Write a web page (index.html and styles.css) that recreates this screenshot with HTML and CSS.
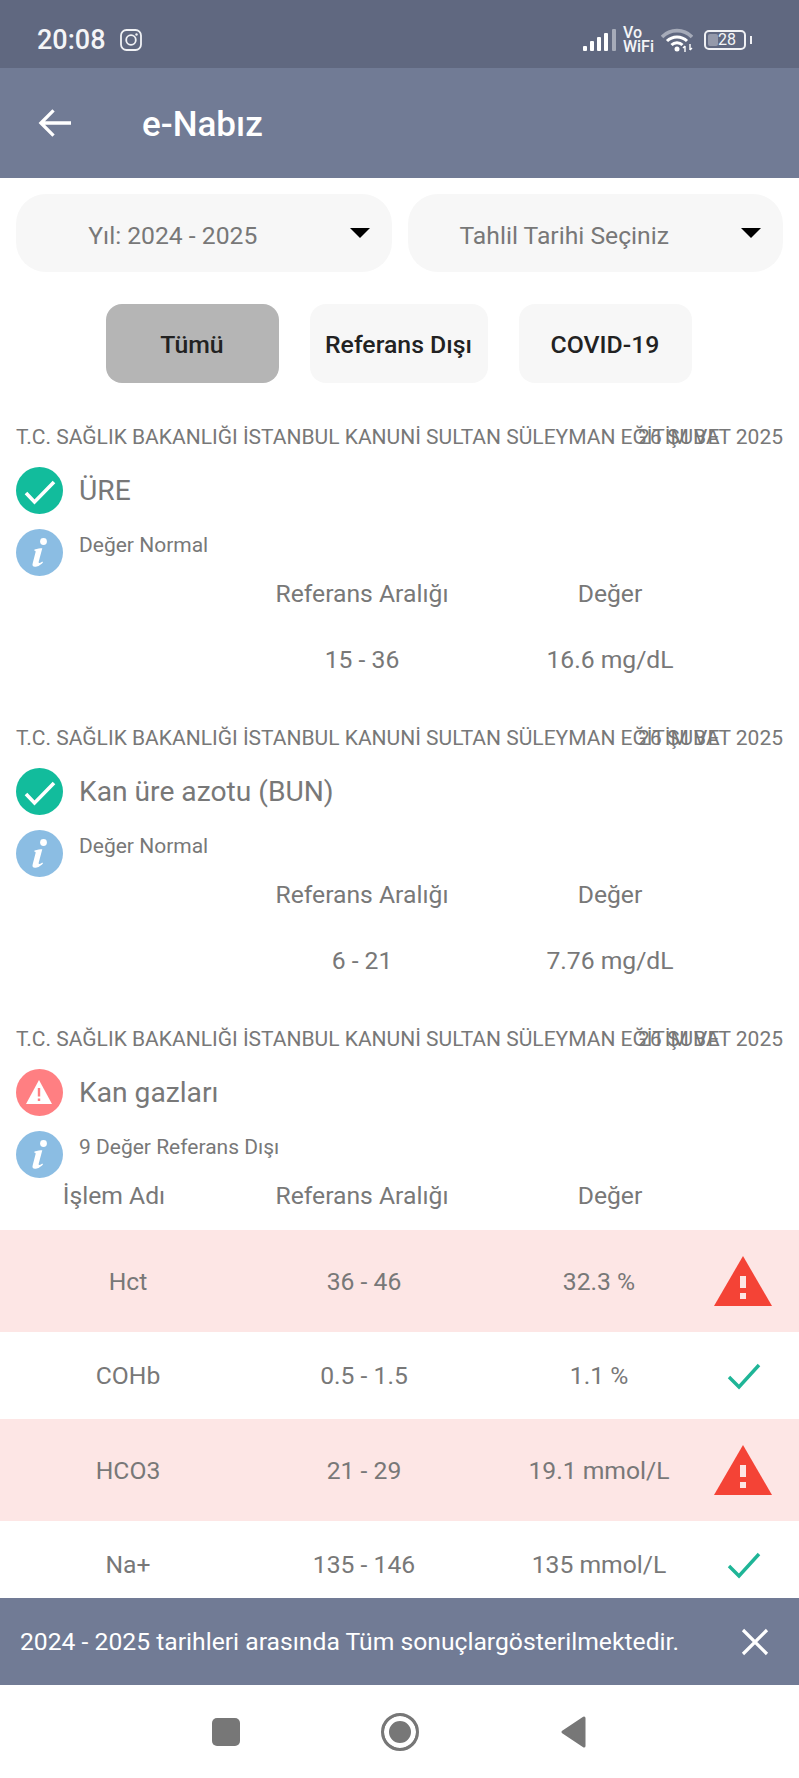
FILE: index.html
```html
<!DOCTYPE html>
<html lang="tr">
<head>
    <meta charset="UTF-8">
    <meta name="viewport" content="width=device-width, initial-scale=1.0">
    <title>e-Nabız</title>
    <link rel="stylesheet" href="styles.css">
</head>
<body>
    <svg class="defs" width="0" height="0">
        <symbol id="ok-circle" viewBox="0 0 47 47">
            <circle cx="23.5" cy="23.5" r="23.5" fill="#12bc9c"/>
            <path d="M10 26l8.500 9L38 15" fill="none" stroke="#fff" stroke-width="3.600"/>
        </symbol>
        <symbol id="info-circle" viewBox="0 0 47 47">
            <circle cx="23.5" cy="23.5" r="23.5" fill="#8bbde3"/>
            <circle cx="27.5" cy="12.5" r="3.4" fill="#fff"/>
            <path d="M18.5 20.5c3-1 5.6-1.3 7.8-1.3l-3.6 13.6c-.4 1.5.6 1.8 3.6-.4l.7 1c-3.4 3.4-5.5 4.3-8 4.3-2.4 0-2.9-1.4-2.3-3.5l2.9-11.2c.2-1-.4-1.3-1.3-1.2z" fill="#fff"/>
        </symbol>
        <symbol id="alert-circle" viewBox="0 0 47 47">
            <circle cx="23.5" cy="23.5" r="23.5" fill="#ff7f82"/>
            <path d="M23 11L36 35H10z" fill="#fff"/>
            <path d="M21.800 19h2.400v8.500h-2.400zM21.800 29.500h2.400v2.600h-2.400z" fill="#ff7f82"/>
        </symbol>
        <symbol id="alert-mark" viewBox="0 0 58 50">
            <path d="M29 0l29 50H0z" fill="#f44336"/>
            <path d="M26 20h6v12h-6zM26 37h6v6h-6z" fill="#fde6e5"/>
        </symbol>
        <symbol id="ok-mark" viewBox="0 0 34 28">
            <path d="M2 15l10 10L32 3" fill="none" stroke="#1fb597" stroke-width="3.4"/>
        </symbol>
    </svg>

    <div class="phone">
        <!-- Barra de estado -->
        <div class="status-bar">
            <span class="clock">20:08</span>
            <svg class="insta" viewBox="0 0 22 22">
                <rect x="1" y="1" width="20" height="20" rx="5.500" fill="none" stroke="#f1f2f5" stroke-width="1.800"/>
                <circle cx="11" cy="11" r="4.800" fill="none" stroke="#f1f2f5" stroke-width="1.800"/>
                <circle cx="16.500" cy="5.500" r="1.200" fill="#f1f2f5"/>
            </svg>
            <div class="status-icons">
                <svg class="signal" viewBox="0 0 34 22">
                    <rect x="0" y="17" width="4" height="5" rx="1" fill="#fff"/>
                    <rect x="7" y="12" width="4" height="10" rx="1" fill="#fff"/>
                    <rect x="14" y="8" width="4" height="14" rx="1" fill="#fff"/>
                    <rect x="21" y="4" width="4" height="18" rx="1" fill="#fff"/>
                    <rect x="29" y="0" width="4" height="22" rx="1" fill="#a6abb9"/>
                </svg>
                <div class="vowifi"><span>Vo</span><span>WiFi</span></div>
                <svg class="wifi" viewBox="0 0 32 24">
                    <path d="M1 9c8-8.500 22-8.500 30 0" fill="none" stroke="#a6abb9" stroke-width="3.600"/>
                    <path d="M6 13c5.500-5.500 14.500-5.500 20 0" fill="none" stroke="#fff" stroke-width="3"/>
                    <path d="M10.500 17c3-3 8-3 11 0" fill="none" stroke="#fff" stroke-width="3"/>
                    <circle cx="16" cy="21" r="2.500" fill="#fff"/>
                    <path d="M24 24v-6M24 18l-2 2M29 16v6M29 22l2-2" fill="none" stroke="#fff" stroke-width="1.400"/>
                </svg>
                <div class="battery">
                    <div class="battery-body"><span class="battery-fill"></span><span class="battery-num">28</span></div>
                    <span class="battery-nub"></span>
                </div>
            </div>
        </div>

        <header class="app-bar">
            <svg class="back" viewBox="0 0 34 30">
                <path d="M16 2L3 15l13 13M3 15h31" fill="none" stroke="#fff" stroke-width="3.400"/>
            </svg>
            <h1>e-Nabız</h1>
        </header>

        <main class="content">
            <div class="selects">
                <div class="select">
                    <span>Yıl: 2024 - 2025</span>
                    <i class="caret"></i>
                </div>
                <div class="select">
                    <span>Tahlil Tarihi Seçiniz</span>
                    <i class="caret"></i>
                </div>
            </div>

            <div class="filters">
                <button class="filter active">Tümü</button>
                <button class="filter wide">Referans Dışı</button>
                <button class="filter">COVID-19</button>
            </div>

            <section class="card">
                <div class="source">
                    <span class="hospital">T.C. SAĞLIK BAKANLIĞI İSTANBUL KANUNİ SULTAN SÜLEYMAN EĞİTİM VE</span>
                    <span class="date">26 ŞUBAT 2025</span>
                </div>
                <div class="title-row">
                    <svg class="badge"><use href="#ok-circle"/></svg>
                    <h3>ÜRE</h3>
                </div>
                <div class="note-row">
                    <svg class="badge"><use href="#info-circle"/></svg>
                    <p>Değer Normal</p>
                </div>
                <div class="row head">
                    <span></span><span>Referans Aralığı</span><span>Değer</span><span></span>
                </div>
                <div class="row">
                    <span></span><span>15 - 36</span><span>16.6 mg/dL</span><span></span>
                </div>
            </section>

            <section class="card">
                <div class="source">
                    <span class="hospital">T.C. SAĞLIK BAKANLIĞI İSTANBUL KANUNİ SULTAN SÜLEYMAN EĞİTİM VE</span>
                    <span class="date">26 ŞUBAT 2025</span>
                </div>
                <div class="title-row">
                    <svg class="badge"><use href="#ok-circle"/></svg>
                    <h3>Kan üre azotu (BUN)</h3>
                </div>
                <div class="note-row">
                    <svg class="badge"><use href="#info-circle"/></svg>
                    <p>Değer Normal</p>
                </div>
                <div class="row head">
                    <span></span><span>Referans Aralığı</span><span>Değer</span><span></span>
                </div>
                <div class="row">
                    <span></span><span>6 - 21</span><span>7.76 mg/dL</span><span></span>
                </div>
            </section>

            <section class="card">
                <div class="source">
                    <span class="hospital">T.C. SAĞLIK BAKANLIĞI İSTANBUL KANUNİ SULTAN SÜLEYMAN EĞİTİM VE</span>
                    <span class="date">26 ŞUBAT 2025</span>
                </div>
                <div class="title-row">
                    <svg class="badge"><use href="#alert-circle"/></svg>
                    <h3>Kan gazları</h3>
                </div>
                <div class="note-row">
                    <svg class="badge"><use href="#info-circle"/></svg>
                    <p>9 Değer Referans Dışı</p>
                </div>
                <div class="row head head-full">
                    <span>İşlem Adı</span><span>Referans Aralığı</span><span>Değer</span><span></span>
                </div>
                <div class="row item out">
                    <span>Hct</span><span>36 - 46</span><span>32.3 %</span>
                    <svg class="mark-alert"><use href="#alert-mark"/></svg>
                </div>
                <div class="row item">
                    <span>COHb</span><span>0.5 - 1.5</span><span>1.1 %</span>
                    <svg class="mark-ok"><use href="#ok-mark"/></svg>
                </div>
                <div class="row item out">
                    <span>HCO3</span><span>21 - 29</span><span>19.1 mmol/L</span>
                    <svg class="mark-alert"><use href="#alert-mark"/></svg>
                </div>
                <div class="row item">
                    <span>Na+</span><span>135 - 146</span><span>135 mmol/L</span>
                    <svg class="mark-ok"><use href="#ok-mark"/></svg>
                </div>
            </section>
        </main>

        <div class="banner">
            <span>2024 - 2025 tarihleri arasında Tüm sonuçlargösterilmektedir.</span>
            <svg class="close" viewBox="0 0 28 28">
                <path d="M2 2l24 24M26 2L2 26" fill="none" stroke="#fff" stroke-width="3.200"/>
            </svg>
        </div>

        <!-- Barra de navegación -->
        <nav class="nav-bar">
            <span class="nav-square"></span>
            <span class="nav-circle"></span>
            <svg class="nav-back" viewBox="0 0 26 32">
                <path d="M24 2v28L3 16z" fill="#777" stroke="#777" stroke-width="3" stroke-linejoin="round"/>
            </svg>
        </nav>
    </div>
</body>
</html>
```

FILE: styles.css
```css
/* Estilos Generales */
body {
    font-family: Roboto, "Liberation Sans", sans-serif;
    background-color: #fff;
    margin: 0;
    padding: 0;
    color: #787878;
}

.defs {
    position: absolute;
}

.phone {
    width: 799px;
    height: 1778px;
    display: flex;
    flex-direction: column;
    overflow: hidden;
}

/* Barra de estado */
.status-bar {
    height: 68px;
    flex: none;
    background-color: #606880;
    display: flex;
    align-items: center;
    padding: 11px 47px 0 37px;
    color: #f4f5f7;
    box-sizing: border-box;
}

.clock {
    font-size: 27px;
    font-weight: 500;
}

.insta {
    width: 22px;
    height: 22px;
    margin-left: 14px;
}

.status-icons {
    margin-left: auto;
    display: flex;
    align-items: center;
}

.signal {
    width: 34px;
    height: 22px;
}

.vowifi {
    display: flex;
    flex-direction: column;
    margin-left: 6px;
    font-size: 16px;
    line-height: 14px;
    font-weight: 500;
}

.wifi {
    width: 32px;
    height: 24px;
    margin-left: 7px;
}

.battery {
    display: flex;
    align-items: center;
    margin-left: 11px;
}

.battery-body {
    width: 42px;
    height: 20px;
    border: 2px solid #f0f1f4;
    border-radius: 5px;
    box-sizing: border-box;
    position: relative;
    display: flex;
    align-items: center;
    justify-content: center;
}

.battery-fill {
    position: absolute;
    left: 2px;
    top: 2px;
    bottom: 2px;
    width: 10px;
    background-color: #9499aa;
    border-radius: 2px;
}

.battery-num {
    position: relative;
    font-size: 16px;
    margin-left: 4px;
}

.battery-nub {
    width: 2px;
    height: 8px;
    margin-left: 4px;
    background-color: #f0f1f4;
}

/* Barra superior */
.app-bar {
    height: 110px;
    flex: none;
    background-color: #717b95;
    display: flex;
    align-items: center;
    padding-left: 38px;
    color: #fff;
}

.back {
    width: 33px;
    height: 30px;
}

.app-bar h1 {
    margin: 2px 0 0 71px;
    font-size: 35px;
    font-weight: 500;
}

/* Contenido */
.content {
    flex: 1;
    min-height: 0;
    overflow: hidden;
    padding-top: 16px;
}

.selects {
    display: flex;
    gap: 16px;
    padding: 0 16px;
}

.select {
    flex: 1;
    height: 78px;
    background-color: #f7f7f7;
    border-radius: 30px;
    display: flex;
    align-items: center;
    justify-content: space-between;
    padding: 0 22px 0 0;
    font-size: 24.700px;
}

.select span {
    flex: 1;
    text-align: center;
    padding: 4px 20px 0 0;
}

.caret {
    width: 0;
    height: 0;
    border-left: 10px solid transparent;
    border-right: 10px solid transparent;
    border-top: 10px solid #000;
}

.filters {
    display: flex;
    justify-content: center;
    gap: 31px;
    margin-top: 32px;
    padding-right: 2px;
}

.filter {
    width: 173px;
    height: 79px;
    background-color: #f7f7f7;
    border: none;
    border-radius: 16px;
    font-family: inherit;
    font-size: 24.800px;
    font-weight: 500;
    color: #222;
    padding: 2px 0 0;
}

.filter.wide {
    width: 178px;
}

.filter.active {
    background-color: #b5b5b5;
}

/* Tarjetas */
.card {
    margin-top: 42px;
}

.card + .card {
    margin-top: 23px;
}

.source {
    display: grid;
    height: 24px;
    line-height: 24px;
    padding: 0 16px;
    font-size: 21px;
    white-space: nowrap;
}

.hospital,
.date {
    grid-area: 1 / 1;
}

.date {
    justify-self: end;
}

.title-row,
.note-row {
    display: flex;
    padding-left: 16px;
    gap: 16px;
}

.title-row {
    align-items: center;
    margin-top: 18px;
}

.note-row {
    margin-top: 15px;
}

.badge {
    width: 47px;
    height: 47px;
    flex: none;
}

.title-row h3 {
    margin: 0;
    font-size: 28.200px;
    font-weight: 400;
}

.note-row p {
    margin: 4px 0 0;
    font-size: 21px;
}

/* Filas de resultados */
.row {
    display: grid;
    grid-template-columns: 228px 268px 228px 38px;
    align-items: center;
    justify-items: center;
    height: 87px;
    font-size: 24.700px;
    text-align: center;
}

.row.head {
    height: 36px;
    margin-top: -1px;
    margin-bottom: 5px;
}

.row.head-full {
    margin-bottom: 17px;
}

.row.item {
    grid-template-columns: 256px 216px 254px 38px;
}

.row.out {
    height: 102px;
    background-color: #fde6e5;
}

.mark-alert {
    width: 58px;
    height: 50px;
    margin-right: 4px;
}

.mark-ok {
    width: 34px;
    height: 28px;
    margin-right: 2px;
}

/* Aviso inferior */
.banner {
    height: 87px;
    flex: none;
    background-color: #717b95;
    color: #fff;
    display: flex;
    align-items: center;
    justify-content: space-between;
    padding: 0 30px 0 20px;
    font-size: 24.700px;
}

.close {
    width: 28px;
    height: 28px;
}

/* Barra de navegación */
.nav-bar {
    height: 93px;
    flex: none;
    background-color: #fff;
    display: flex;
    align-items: center;
    justify-content: center;
    gap: 141px;
    padding-right: 2px;
}

.nav-square {
    width: 28px;
    height: 28px;
    border-radius: 5px;
    background-color: #777;
}

.nav-circle {
    width: 38px;
    height: 38px;
    box-sizing: border-box;
    border-radius: 50%;
    border: 3px solid #777;
    background-color: #777;
    box-shadow: inset 0 0 0 5px #fff;
}

.nav-back {
    width: 26px;
    height: 32px;
}
```
